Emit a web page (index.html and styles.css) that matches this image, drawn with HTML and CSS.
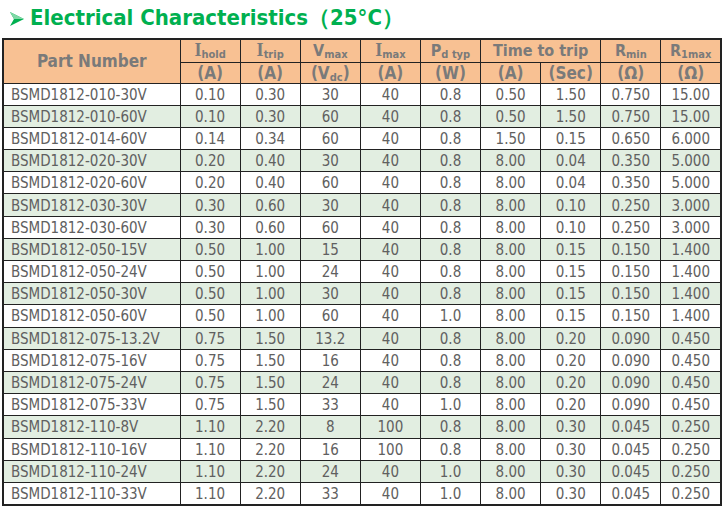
FILE: index.html
```html
<!DOCTYPE html>
<html>
<head>
<meta charset="utf-8">
<link rel="stylesheet" href="styles.css">
</head>
<body>
<h1 class="title"><svg class="arrow" width="16" height="16" viewBox="0 0 16 16"><polygon points="1,1 15,8 1,15 5,8" fill="#00b050"/><polygon points="1,1 15,8 5,8" fill="#7fd8a6"/></svg><span>Electrical Characteristics（25°C）</span></h1>
<table class="spec">
<colgroup><col class="c-part"><col><col><col><col><col><col><col><col><col></colgroup>
<thead>
<tr class="h1">
<th rowspan="2" class="pn">Part Number</th>
<th><span class="sym">I</span><sub>hold</sub></th>
<th><span class="sym">I</span><sub>trip</sub></th>
<th>V<sub>max</sub></th>
<th><span class="sym">I</span><sub>max</sub></th>
<th>P<sub>d typ</sub></th>
<th colspan="2">Time to trip</th>
<th>R<sub>min</sub></th>
<th>R<sub>1max</sub></th>
</tr>
<tr class="h2">
<th>(A)</th><th>(A)</th><th>(V<sub>dc</sub>)</th><th>(A)</th><th>(W)</th><th>(A)</th><th>(Sec)</th><th>(Ω)</th><th>(Ω)</th>
</tr>
</thead>
<tbody>
<tr><td>BSMD1812-010-30V</td><td>0.10</td><td>0.30</td><td>30</td><td>40</td><td>0.8</td><td>0.50</td><td>1.50</td><td>0.750</td><td>15.00</td></tr>
<tr class="g"><td>BSMD1812-010-60V</td><td>0.10</td><td>0.30</td><td>60</td><td>40</td><td>0.8</td><td>0.50</td><td>1.50</td><td>0.750</td><td>15.00</td></tr>
<tr><td>BSMD1812-014-60V</td><td>0.14</td><td>0.34</td><td>60</td><td>40</td><td>0.8</td><td>1.50</td><td>0.15</td><td>0.650</td><td>6.000</td></tr>
<tr class="g"><td>BSMD1812-020-30V</td><td>0.20</td><td>0.40</td><td>30</td><td>40</td><td>0.8</td><td>8.00</td><td>0.04</td><td>0.350</td><td>5.000</td></tr>
<tr><td>BSMD1812-020-60V</td><td>0.20</td><td>0.40</td><td>60</td><td>40</td><td>0.8</td><td>8.00</td><td>0.04</td><td>0.350</td><td>5.000</td></tr>
<tr class="g"><td>BSMD1812-030-30V</td><td>0.30</td><td>0.60</td><td>30</td><td>40</td><td>0.8</td><td>8.00</td><td>0.10</td><td>0.250</td><td>3.000</td></tr>
<tr><td>BSMD1812-030-60V</td><td>0.30</td><td>0.60</td><td>60</td><td>40</td><td>0.8</td><td>8.00</td><td>0.10</td><td>0.250</td><td>3.000</td></tr>
<tr class="g"><td>BSMD1812-050-15V</td><td>0.50</td><td>1.00</td><td>15</td><td>40</td><td>0.8</td><td>8.00</td><td>0.15</td><td>0.150</td><td>1.400</td></tr>
<tr><td>BSMD1812-050-24V</td><td>0.50</td><td>1.00</td><td>24</td><td>40</td><td>0.8</td><td>8.00</td><td>0.15</td><td>0.150</td><td>1.400</td></tr>
<tr class="g"><td>BSMD1812-050-30V</td><td>0.50</td><td>1.00</td><td>30</td><td>40</td><td>0.8</td><td>8.00</td><td>0.15</td><td>0.150</td><td>1.400</td></tr>
<tr><td>BSMD1812-050-60V</td><td>0.50</td><td>1.00</td><td>60</td><td>40</td><td>1.0</td><td>8.00</td><td>0.15</td><td>0.150</td><td>1.400</td></tr>
<tr class="g"><td>BSMD1812-075-13.2V</td><td>0.75</td><td>1.50</td><td>13.2</td><td>40</td><td>0.8</td><td>8.00</td><td>0.20</td><td>0.090</td><td>0.450</td></tr>
<tr><td>BSMD1812-075-16V</td><td>0.75</td><td>1.50</td><td>16</td><td>40</td><td>0.8</td><td>8.00</td><td>0.20</td><td>0.090</td><td>0.450</td></tr>
<tr class="g"><td>BSMD1812-075-24V</td><td>0.75</td><td>1.50</td><td>24</td><td>40</td><td>0.8</td><td>8.00</td><td>0.20</td><td>0.090</td><td>0.450</td></tr>
<tr><td>BSMD1812-075-33V</td><td>0.75</td><td>1.50</td><td>33</td><td>40</td><td>1.0</td><td>8.00</td><td>0.20</td><td>0.090</td><td>0.450</td></tr>
<tr class="g"><td>BSMD1812-110-8V</td><td>1.10</td><td>2.20</td><td>8</td><td>100</td><td>0.8</td><td>8.00</td><td>0.30</td><td>0.045</td><td>0.250</td></tr>
<tr><td>BSMD1812-110-16V</td><td>1.10</td><td>2.20</td><td>16</td><td>100</td><td>0.8</td><td>8.00</td><td>0.30</td><td>0.045</td><td>0.250</td></tr>
<tr class="g"><td>BSMD1812-110-24V</td><td>1.10</td><td>2.20</td><td>24</td><td>40</td><td>1.0</td><td>8.00</td><td>0.30</td><td>0.045</td><td>0.250</td></tr>
<tr><td>BSMD1812-110-33V</td><td>1.10</td><td>2.20</td><td>33</td><td>40</td><td>1.0</td><td>8.00</td><td>0.30</td><td>0.045</td><td>0.250</td></tr>
</tbody>
</table>
</body>
</html>
```
FILE: styles.css
```css
html, body {
  margin: 0;
  padding: 0;
  background: #ffffff;
}
.title {
  margin: 0;
  height: 38px;
  display: flex;
  align-items: center;
  padding-left: 9px;
  gap: 4px;
  font-family: "DejaVu Sans Condensed", "DejaVu Sans", sans-serif;
  font-weight: bold;
  font-size: 22px;
  color: #00b050;
}
.title span {
  position: relative;
  top: -1px;
}
.arrow {
  display: block;
  margin-right: 1px;
}
.spec {
  margin-left: 2px;
  width: 720px;
  table-layout: fixed;
  border-collapse: collapse;
  border: 2px solid #222222;
  font-family: "DejaVu Sans Condensed", "DejaVu Sans", sans-serif;
}
.c-part {
  width: 177px;
}
.spec th, .spec td {
  border: 1px solid #222222;
  padding: 0;
  text-align: center;
  white-space: nowrap;
  overflow: hidden;
}
.spec th {
  background: #f8c193;
  color: #7a7a7a;
  font-weight: bold;
  font-size: 16px;
}
.h1 {
  height: 23px;
}
.h2 {
  height: 21px;
}
.h2 th {
  font-size: 17px;
}
.spec th.pn {
  font-size: 17px;
}
.spec sub {
  font-size: 11px;
  vertical-align: baseline;
  position: relative;
  top: 2px;
}
.sym {
  font-family: "Liberation Serif", serif;
  font-size: 18px;
}
.spec td {
  height: 20.2px;
  font-size: 15px;
  color: #606060;
  line-height: 16px;
  padding-top: 1px;
}
.spec td:first-child {
  text-align: left;
  padding-left: 7px;
}
.spec tr.g td {
  background: #e2eee1;
}
```
